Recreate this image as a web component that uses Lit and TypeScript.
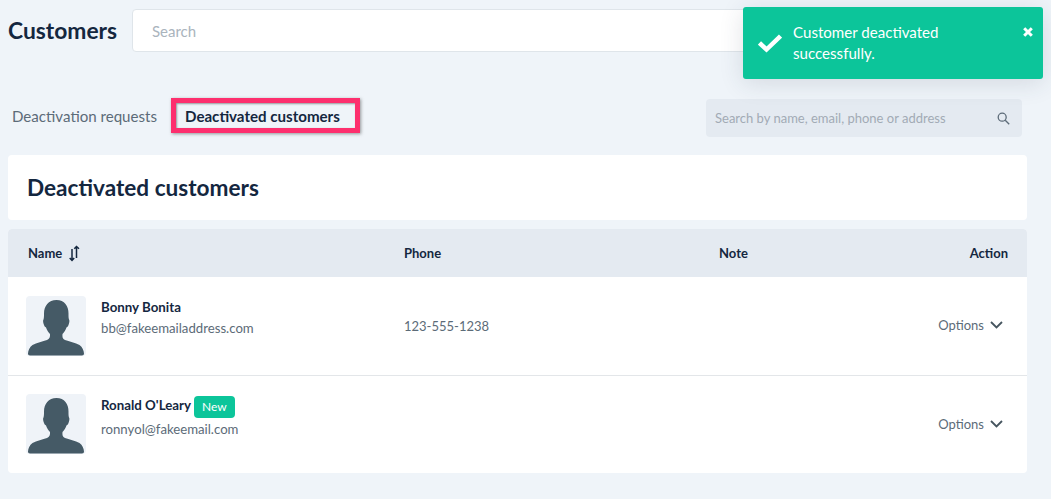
import { LitElement, html, css, svg } from "lit";
import { customElement } from "lit/decorators.js";

const customers = [
  { name: "Bonny Bonita", email: "bb@fakeemailaddress.com", phone: "123-555-1238", isNew: false },
  { name: "Ronald O'Leary", email: "ronnyol@fakeemail.com", phone: "", isNew: true },
];

// silhouette used for customers without a photo
const avatar = svg`<svg class="avatar" viewBox="0 0 60 60">
  <rect width="60" height="60" rx="4" fill="#eff3f8"/>
  <path fill="#455a66" d="M30.500 4C22.500 4 18 10 18 17.500C18 20 18 22 17.500 23.500C16.800 24 17 27 18 29C18.500 30.500 19.300 31 20 31.500C21 34.500 22.500 36.500 24 38C24.300 41 23.500 43 21 44C17 45.600 10.500 46.500 6.500 49C3.500 51 2.200 54.500 2 57.500C2 58.800 2.700 59.500 4 59.500H56C57.300 59.500 58 58.800 58 57.500C57.800 54.500 56.500 51 53.500 49C49.500 46.500 43 45.600 39 44C36.500 43 36.200 41 36.500 38C38 36.500 39.500 34.500 40.500 31.500C41.200 31 42 30.500 42.500 29C43.500 27 43.700 24 43 23.500C42.500 22 42.500 20 42.500 17.500C42.500 10 38.500 4 30.500 4Z"/>
</svg>`;

@customElement("app-root")
export class AppRoot extends LitElement {
  static styles = css`
    :host {
      display: block;
      height: 499px;
      overflow: hidden;
      position: relative;
      background: #eff4f9;
      font-family: Lato, "Open Sans", sans-serif;
      color: #14273f;
    }
    .page {
      display: flex;
      flex-direction: column;
      padding: 9px 24px 0 8px;
    }
    .top {
      display: flex;
      align-items: center;
      gap: 15px;
    }
    h1 {
      margin: 0;
      width: 109px;
      white-space: nowrap;
      font-size: 22.800px;
      font-weight: 700;
      line-height: 43px;
    }
    .main-search {
      flex: 1;
      height: 43px;
      box-sizing: border-box;
      padding-left: 19px;
      display: flex;
      align-items: center;
      background: #fff;
      border: 1px solid #dfe5ea;
      border-radius: 4px;
      font-size: 15px;
      color: #aab4bd;
    }
    .tabs {
      display: flex;
      align-items: flex-start;
      margin-top: 47px;
      height: 38px;
      padding-right: 5px;
    }
    .tab {
      margin-left: 4px;
      line-height: 34px;
      font-size: 15.100px;
      color: #5c6b78;
    }
    .tab.active {
      margin: -1px 0 0 14px;
      padding: 1px 15px 0 9px;
      height: 35px;
      box-sizing: border-box;
      display: flex;
      align-items: center;
      border: 5px solid #fd2f6e;
      box-shadow: 1px 1px 3px rgba(60, 60, 60, 0.5), inset 1px 1px 2px rgba(60, 60, 60, 0.5);
      font-weight: 700;
      color: #14273f;
    }
    .filter {
      margin-left: auto;
      width: 316px;
      height: 38px;
      box-sizing: border-box;
      padding: 0 12px 0 9px;
      display: flex;
      align-items: center;
      justify-content: space-between;
      background: #e4eaf1;
      border-radius: 4px;
      font-size: 13px;
      color: #a2abb5;
    }
    .filter svg {
      width: 13px;
      height: 13px;
    }
    .title-card {
      margin-top: 18px;
      height: 65px;
      padding-left: 19px;
      display: flex;
      align-items: center;
      background: #fff;
      border-radius: 4px;
    }
    h2 {
      margin: 0;
      font-size: 22.600px;
      font-weight: 700;
    }
    .table {
      margin-top: 9px;
      background: #fff;
      border-radius: 4px;
      overflow: hidden;
    }
    .row {
      display: grid;
      align-items: center;
      box-sizing: border-box;
    }
    .head {
      grid-template-columns: 376px 315px 1fr auto;
      padding: 0 19px 0 20px;
      height: 48px;
      background: #e4eaf1;
      font-size: 13px;
      font-weight: 700;
    }
    .head .name {
      display: flex;
      align-items: center;
      gap: 7px;
    }
    .head svg {
      width: 11px;
      height: 17px;
    }
    .body {
      grid-template-columns: 378px 315px 1fr auto;
      padding: 0 19px 0 18px;
      height: 98px;
      font-size: 13px;
      color: #5c6b78;
    }
    .body + .body {
      border-top: 1px solid #e3e6e9;
    }
    .body + .body .who {
      margin-top: -1px;
    }
    .who {
      display: flex;
      align-items: flex-start;
      gap: 15px;
    }
    .avatar {
      width: 60px;
      height: 60px;
      display: block;
    }
    .who-name {
      display: flex;
      align-items: flex-start;
      gap: 3px;
      font-size: 13.300px;
      line-height: 22px;
      font-weight: 700;
      color: #14273f;
    }
    .who-email {
      margin-top: 2px;
      font-size: 13.200px;
      line-height: 16px;
    }
    .badge {
      padding: 0 8px;
      height: 22px;
      margin: 2px 0 1px;
      display: flex;
      align-items: center;
      background: #0cc59a;
      border-radius: 4px;
      font-size: 12px;
      font-weight: 400;
      color: #fff;
    }
    .options {
      display: flex;
      align-items: center;
      gap: 6px;
      padding-right: 5px;
      margin-bottom: 2px;
    }
    .options svg {
      width: 13px;
      height: 8px;
    }
    .toast {
      position: absolute;
      left: 743px;
      top: 7px;
      width: 300px;
      height: 72px;
      box-sizing: border-box;
      padding: 15px 0 0 15px;
      display: flex;
      background: #0cc59a;
      border-radius: 3px;
      box-shadow: 0 4px 24px rgba(40, 60, 80, 0.14);
      color: #fff;
      font-size: 15.100px;
      line-height: 21px;
    }
    .toast .check {
      width: 24px;
      height: 20px;
      margin-top: 11px;
      flex: none;
    }
    .toast p {
      margin: 0 0 0 11px;
      width: 170px;
    }
    .toast .close {
      position: absolute;
      right: 10px;
      top: 20px;
      width: 10px;
      height: 10px;
    }
  `;

  render() {
    return html`
      <div class="page">
        <div class="top">
          <h1>Customers</h1>
          <div class="main-search">Search</div>
        </div>
        <div class="tabs">
          <span class="tab">Deactivation requests</span>
          <span class="tab active">Deactivated customers</span>
          <div class="filter">
            Search by name, email, phone or address
            <svg viewBox="0 0 13 13" fill="none" stroke="#5c6b78" stroke-width="1.300">
              <circle cx="5.200" cy="5.200" r="4"/>
              <path d="M8.200 8.200L12.200 12.200"/>
            </svg>
          </div>
        </div>
        <div class="title-card"><h2>Deactivated customers</h2></div>
        <div class="table">
          <div class="row head">
            <div class="name">
              Name
              <svg viewBox="0 0 11 17" fill="none" stroke="#14273f" stroke-width="1.500">
                <path d="M3 4V15.500M0.700 13L3 15.500L5.200 13"/>
                <path d="M7.500 1.500V13M5.300 3.800L7.500 1.500L10 3.800"/>
              </svg>
            </div>
            <div>Phone</div>
            <div>Note</div>
            <div>Action</div>
          </div>
          ${customers.map(
            (c) => html`
              <div class="row body">
                <div class="who">
                  ${avatar}
                  <div>
                    <div class="who-name">
                      ${c.name}${c.isNew ? html`<span class="badge">New</span>` : ""}
                    </div>
                    <div class="who-email">${c.email}</div>
                  </div>
                </div>
                <div>${c.phone}</div>
                <div></div>
                <div class="options">
                  Options
                  <svg viewBox="0 0 13 8" fill="none" stroke="#46555f" stroke-width="1.800">
                    <path d="M1 1L6.500 6.500L12 1"/>
                  </svg>
                </div>
              </div>
            `
          )}
        </div>
      </div>
      <div class="toast">
        <svg class="check" viewBox="0 0 24 20" fill="none" stroke="#fff" stroke-width="4.500">
          <path d="M1.500 10L8.500 16.500L22.500 3"/>
        </svg>
        <p>Customer deactivated successfully.</p>
        <svg class="close" viewBox="0 0 10 10" fill="none" stroke="#fff" stroke-width="3">
          <path d="M1.200 1.200L8.800 8.800M8.800 1.200L1.200 8.800"/>
        </svg>
      </div>
    `;
  }
}
